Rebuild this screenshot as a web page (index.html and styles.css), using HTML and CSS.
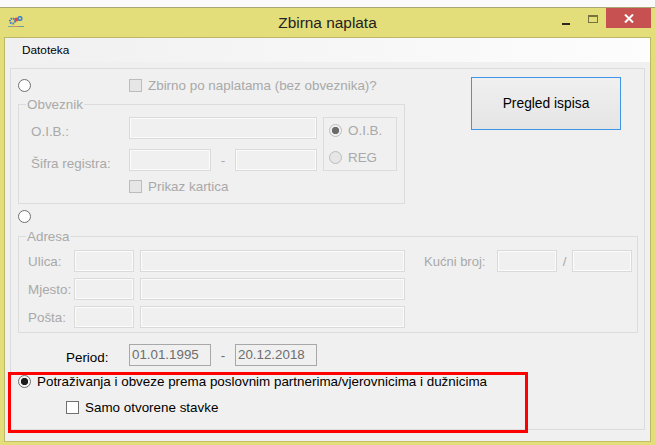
FILE: index.html
```html
<!DOCTYPE html>
<html lang="hr">
<head>
<meta charset="utf-8">
<title>Zbirna naplata</title>
<link rel="stylesheet" href="styles.css">
</head>
<body>
<div class="window">
  <header class="titlebar">
    <svg class="app-icon" width="16" height="12" viewBox="0 0 16 12">
      <circle cx="4.5" cy="5" r="2.5" fill="none" stroke="#4a7fc0" stroke-width="2" stroke-dasharray="1.6 .8"/>
      <circle cx="8.5" cy="3.5" r="2" fill="#e8483a"/>
      <circle cx="12" cy="2.5" r="1.8" fill="none" stroke="#3f86c9" stroke-width="1.6"/>
      <rect x="0" y="10" width="6" height="1" fill="#7fa7a0"/>
      <rect x="6" y="10" width="4" height="1" fill="#e08a50"/>
      <rect x="10" y="10" width="6" height="1" fill="#6f9a9f"/>
    </svg>
    <h1 class="title">Zbirna naplata</h1>
    <div class="controls">
      <div class="ctl"><span class="min-glyph"></span></div>
      <div class="ctl"><span class="max-glyph"></span></div>
      <div class="ctl close">
        <svg width="10" height="9" viewBox="0 0 10 9"><path d="M1 0.5 L9 8.5 M9 0.5 L1 8.5" stroke="#fff" stroke-width="2"/></svg>
      </div>
    </div>
  </header>
  <div class="client">
    <nav class="menu"><span class="menu-item">Datoteka</span></nav>
    <main class="panel">
      <div class="top">
        <div class="top-left">
          <div class="row-first">
            <span class="radio"></span>
            <label class="opt muted"><span class="check off"></span>Zbirno po naplatama (bez obveznika)?</label>
          </div>
          <section class="group obveznik">
            <span class="legend">Obveznik</span>
            <span class="lbl oib-l">O.I.B.:</span>
            <input class="field span3" disabled>
            <div class="mini">
              <label class="opt muted"><span class="radio off on"></span>O.I.B.</label>
              <label class="opt muted"><span class="radio off fill"></span>REG</label>
            </div>
            <span class="lbl oib-l">Šifra registra:</span>
            <input class="field" disabled>
            <span class="dash muted">-</span>
            <input class="field" disabled>
            <label class="opt muted kartica"><span class="check off"></span>Prikaz kartica</label>
          </section>
        </div>
        <button class="preview" type="button">Pregled ispisa</button>
      </div>
      <span class="radio second"></span>
      <section class="group adresa">
        <span class="legend">Adresa</span>
        <span class="lbl">Ulica:</span>
        <input class="field" disabled>
        <input class="field gap" disabled>
        <span class="lbl kucni">Kućni broj:</span>
        <input class="field" disabled>
        <span class="slash muted">/</span>
        <input class="field" disabled>
        <span class="lbl">Mjesto:</span>
        <input class="field" disabled>
        <input class="field gap" disabled>
        <span class="blank"></span>
        <span class="lbl">Pošta:</span>
        <input class="field" disabled>
        <input class="field gap" disabled>
      </section>
      <div class="period">
        <span class="period-l">Period:</span>
        <input class="date" value="01.01.1995" disabled>
        <span class="dash grey">-</span>
        <input class="date" value="20.12.2018" disabled>
      </div>
      <label class="opt active main-opt"><span class="radio sel"></span>Potraživanja i obveze prema poslovnim partnerima/vjerovnicima i dužnicima</label>
      <label class="opt active sub-opt"><span class="check"></span>Samo otvorene stavke</label>
      <div class="highlight"></div>
    </main>
  </div>
</div>
</body>
</html>
```
FILE: styles.css
```css
* { box-sizing: border-box; }
html, body { margin: 0; padding: 0; }
body {
  width: 655px;
  height: 445px;
  overflow: hidden;
  background: #fafafa;
  padding-top: 7px;
  font-family: "Liberation Sans", Arial, sans-serif;
  font-size: 13.42px;
}
.window {
  height: 438px;
  background: #e3dd7a;
  border-top: 1px solid #a9a678;
  padding: 0 4px 3px;
  display: flex;
  flex-direction: column;
}
.titlebar {
  height: 29px;
  display: grid;
  grid-template-columns: 1fr auto 1fr;
  align-items: start;
}
.app-icon { margin: 8px 0 0 4px; }
.title {
  margin: 6px 0 0;
  font-size: 15.4px;
  line-height: 18px;
  font-weight: 400;
  color: #222;
}
.controls { display: flex; justify-content: flex-end; }
.ctl {
  width: 27px;
  height: 20px;
  display: flex;
  align-items: center;
  justify-content: center;
}
.close { width: 45px; background: #c75050; }
.min-glyph { width: 8px; height: 2px; background: #2b2b20; margin-top: 12px; }
.max-glyph {
  width: 10px;
  height: 8px;
  border: 1px solid #77733f;
  border-top-width: 2px;
  margin-top: 1px;
}
.client {
  flex: 1;
  background: #f0f0f0;
  border: 1px solid #bdb868;
  border-bottom-color: #c4bf60;
  display: flex;
  flex-direction: column;
}
.menu {
  height: 24px;
  padding: 4px 0 0 17px;
  background: linear-gradient(90deg, #f0f0f0, #fdfdfd);
  font-size: 11.8px;
  line-height: 16px;
  color: #000;
  flex: none;
}
.panel {
  position: relative;
  width: 635px;
  height: 362px;
  margin: 6px 0 0 5px;
  border: 1px solid #dcdcdc;
  padding: 8px 0 0 7px;
  display: flex;
  flex-direction: column;
  align-items: flex-start;
}
.top { display: flex; align-items: flex-start; }
.top-left { padding-top: 2px; width: 387px; }
.row-first { display: flex; height: 13px; }
.row-first .opt { margin-left: 98px; }
.preview {
  margin-left: 66px;
  width: 150px;
  height: 53px;
  border: 1px solid #3c95e8;
  background: linear-gradient(#f0f0f0, #e5e5e5);
  font: 13.8px "Liberation Sans", Arial, sans-serif;
  color: #000;
  padding: 0;
}
.opt {
  display: flex;
  align-items: center;
  gap: 6px;
  height: 13px;
  line-height: 16px;
  white-space: nowrap;
}
.muted { color: #a9a9a9; }
.active { color: #000; }
.radio {
  width: 13px;
  height: 13px;
  border: 1px solid #6f6f6f;
  border-radius: 50%;
  background: #fff;
  flex: none;
  display: block;
}
.radio.off { border-color: #bdbdbd; background: #f0f0f0; }
.radio.fill { background: #e6e6e6; }
.radio.on { background: radial-gradient(circle, #6b6b6b 0 3.4px, #f0f0f0 3.9px); }
.radio.sel { background: radial-gradient(circle, #1c1c1c 0 3.4px, #f4f4f4 3.9px); }
.check {
  width: 13px;
  height: 13px;
  border: 1px solid #707070;
  background: #fff;
  flex: none;
  display: block;
}
.check.off { border-color: #bcbcbc; background: #e6e6e6; }
.group { position: relative; border: 1px solid #dcdcdc; }
.legend {
  position: absolute;
  top: -8px;
  left: 7px;
  padding: 0 1px;
  background: #f0f0f0;
  color: #a9a9a9;
  line-height: 16px;
}
.obveznik {
  margin-top: 12px;
  height: 100px;
  padding: 12px 0 0 0;
  display: grid;
  grid-template-columns: 110px 82px 24px 82px 80px;
  grid-template-rows: 22px 22px;
  row-gap: 10px;
  align-items: center;
}
.lbl { color: #a9a9a9; line-height: 16px; white-space: nowrap; padding: 1px 0 0 9px; }
.oib-l { padding: 7px 0 0 12px; }
.field {
  display: block;
  width: 100%;
  height: 22px;
  margin: 0;
  padding: 0;
  border: 1px solid #dadada;
  box-shadow: inset 0 0 0 1px #fbfbfb;
  background: #f0f0f0;
}
.span3 { grid-column: 2 / 5; }
.dash { text-align: center; padding-right: 0; }
.mini {
  grid-column: 5;
  grid-row: 1 / 3;
  margin-left: 6px;
  width: 74px;
  height: 54px;
  border: 1px solid #dcdcdc;
  padding: 6px 0 0 5px;
  display: flex;
  flex-direction: column;
  gap: 14px;
  align-self: start;
}
.kartica { grid-column: 2 / 6; grid-row: 3; margin-top: -1px; align-self: start; }
.second { margin-top: 6px; }
.adresa {
  margin-top: 13px;
  width: 620px;
  height: 97px;
  padding-top: 13px;
  display: grid;
  grid-template-columns: 55px 60px 271px 92px 60px 15px 60px;
  grid-template-rows: 22px 22px 22px;
  row-gap: 6px;
  align-items: center;
}
.gap { width: 265px; margin-left: 6px; }
.kucni { padding-left: 19px; font-size: 13px; }
.slash { text-align: center; }
.blank { grid-column: 4 / 8; grid-row: 2 / 4; }
.period {
  margin-top: 11px;
  height: 22px;
  display: grid;
  grid-template-columns: 111px 82px 24px 82px;
  align-items: center;
}
.period-l { padding: 6px 0 0 48px; color: #000; line-height: 16px; }
.date {
  height: 22px;
  width: 100%;
  margin: 0;
  padding: 0 2px 2px;
  border: 1px solid #a8a8a8;
  background: #f0f0f0;
  font: 13.33px "Liberation Sans", Arial, sans-serif;
  color: #6d6d6d;
  opacity: 1;
}
.grey { color: #6d6d6d; }
.main-opt { margin-top: 9px; }
.sub-opt { margin: 13px 0 0 48px; }
.highlight {
  position: absolute;
  left: -3px;
  top: 303px;
  width: 520px;
  height: 61px;
  border: 3px solid #ff0000;
  pointer-events: none;
}
```
